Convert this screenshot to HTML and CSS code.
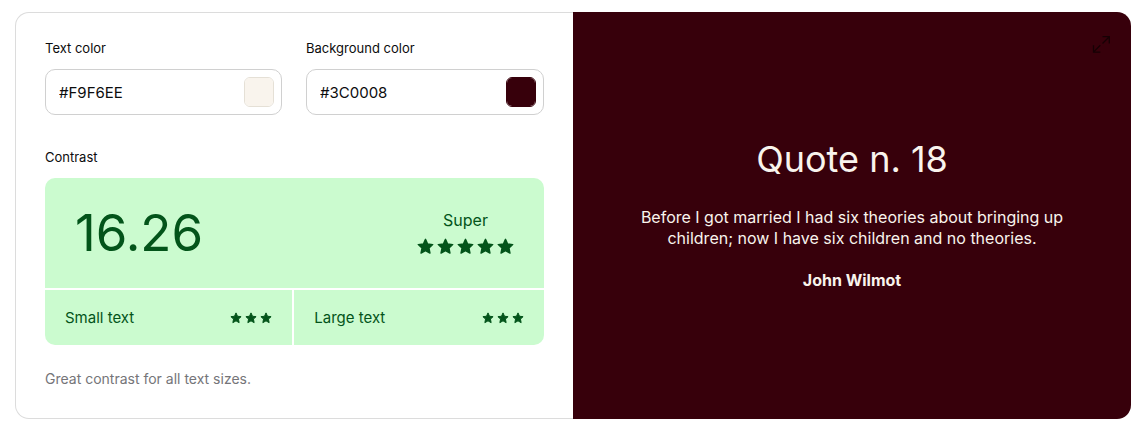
FILE: index.html
```html
<!DOCTYPE html>
<html lang="en">
<head>
  <meta charset="utf-8">
  <meta name="viewport" content="width=device-width, initial-scale=1">
  <title>Color contrast checker</title>
  <link rel="stylesheet" href="styles.css">
</head>
<body>
  <svg class="sprite" aria-hidden="true">
    <symbol id="star" viewBox="0 0 24 24">
      <path d="M12 1.800l3 6.700 7.200 .8-5.300 4.900 1.400 7.100L12 17.700l-6.300 3.600 1.400-7.100-5.300-4.900 7.200-.8z" fill="currentColor" stroke="currentColor" stroke-width="2" stroke-linejoin="round"/>
    </symbol>
  </svg>
  <main class="checker">
    <section class="settings">
      <div class="fields">
        <div class="field">
          <label class="label" for="text-hex">Text color</label>
          <div class="control">
            <input class="hex" id="text-hex" type="text" value="#F9F6EE" spellcheck="false">
            <input class="swatch swatch-text" type="color" value="#f9f4ed" aria-label="Pick text color">
          </div>
        </div>
        <div class="field">
          <label class="label" for="background-hex">Background color</label>
          <div class="control">
            <input class="hex" id="background-hex" type="text" value="#3C0008" spellcheck="false">
            <input class="swatch swatch-background" type="color" value="#37000b" aria-label="Pick background color">
          </div>
        </div>
      </div>
      <h2 class="label contrast-label">Contrast</h2>
      <div class="result">
        <div class="score">
          <span class="ratio">16.26</span>
          <div class="rating">
            <span class="verdict">Super</span>
            <div class="stars" role="img" aria-label="5 stars">
              <svg class="star"><use href="#star"/></svg>
              <svg class="star"><use href="#star"/></svg>
              <svg class="star"><use href="#star"/></svg>
              <svg class="star"><use href="#star"/></svg>
              <svg class="star"><use href="#star"/></svg>
            </div>
          </div>
        </div>
        <div class="size">
          <span>Small text</span>
          <div class="stars" role="img" aria-label="3 stars">
            <svg class="star star-small"><use href="#star"/></svg>
            <svg class="star star-small"><use href="#star"/></svg>
            <svg class="star star-small"><use href="#star"/></svg>
          </div>
        </div>
        <div class="size">
          <span>Large text</span>
          <div class="stars" role="img" aria-label="3 stars">
            <svg class="star star-small"><use href="#star"/></svg>
            <svg class="star star-small"><use href="#star"/></svg>
            <svg class="star star-small"><use href="#star"/></svg>
          </div>
        </div>
      </div>
      <p class="note">Great contrast for all text sizes.</p>
    </section>
    <section class="preview">
      <button class="expand" type="button" aria-label="Full screen">
        <svg class="expand-icon" viewBox="0 0 20 20" fill="none" stroke="currentColor" stroke-width="1.300">
          <path d="M11.500 2.700h6.800v6.800M18.300 2.700l-6.800 6.800M2.500 11.300v6.800h6.800M2.500 18.100l6.800-6.800"/>
        </svg>
      </button>
      <h1 class="quote-title">Quote n. 18</h1>
      <p class="quote">Before I got married I had six theories about bringing up children; now I have six children and no theories.</p>
      <p class="author">John Wilmot</p>
    </section>
  </main>
</body>
</html>
```

FILE: styles.css
```css
* {
  box-sizing: border-box;
}

body {
  margin: 0;
  padding: 12px 14px 12px 15px;
  background: #fff;
  color: #0c0c0d;
  font-family: Inter, "Liberation Sans", sans-serif;
}

h1, h2, p {
  margin: 0;
}

.sprite {
  display: none;
}

.checker {
  display: grid;
  grid-template-columns: minmax(0, 1fr) minmax(0, 1fr);
}

.settings {
  padding: 25px 29px 29px;
  border: 1px solid #dcdcdc;
  border-right: 0;
  border-radius: 14px 0 0 14px;
}

.fields {
  display: grid;
  grid-template-columns: minmax(0, 237fr) minmax(0, 238fr);
  gap: 24px;
}

.label {
  display: block;
  margin-bottom: 11px;
  font-size: 13px;
  font-weight: 400;
  line-height: 20px;
}

.control {
  display: flex;
  align-items: center;
  height: 46px;
  padding: 0 7px 0 13px;
  border: 1px solid #d0d0d0;
  border-radius: 10px;
}

.hex {
  flex: 1;
  min-width: 0;
  height: 30px;
  padding: 0;
  border: 0;
  outline: 0;
  background: none;
  color: inherit;
  font: 15px/20px Inter, "Liberation Sans", sans-serif;
}

.swatch {
  appearance: none;
  width: 30px;
  height: 30px;
  padding: 0;
  border: 1px solid;
  border-radius: 6px;
  overflow: hidden;
  cursor: pointer;
}

.swatch::-webkit-color-swatch-wrapper {
  padding: 0;
}

.swatch::-webkit-color-swatch {
  border: 0;
  border-radius: 0;
}

.swatch-text {
  border-color: #e5e0d6;
  background: #f9f4ed;
}

.swatch-background {
  border-color: #37000b;
  background: #37000b;
}

.contrast-label {
  margin-top: 32px;
}

.result {
  display: grid;
  grid-template-columns: 99fr 100fr;
  gap: 2px;
  border-radius: 10px;
  overflow: hidden;
  color: #03541a;
}

.score {
  grid-column: 1 / -1;
  display: flex;
  align-items: center;
  justify-content: space-between;
  height: 110px;
  padding: 0 30px;
  background: #cbfbcf;
}

.ratio {
  font-size: 51px;
  line-height: 60px;
}

.rating {
  display: grid;
  justify-items: center;
  gap: 8px;
  padding-bottom: 2px;
}

.verdict {
  font-size: 16px;
  line-height: 20px;
}

.stars {
  display: flex;
  gap: 3px;
}

.star {
  width: 17px;
  height: 17px;
}

.star-small {
  width: 12px;
  height: 12px;
}

.size {
  display: flex;
  align-items: center;
  justify-content: space-between;
  height: 55px;
  padding: 0 20px;
  background: #cbfbcf;
  font-size: 15px;
  line-height: 20px;
}

.note {
  margin-top: 24px;
  color: #757579;
  font-size: 14px;
  line-height: 20px;
}

.preview {
  position: relative;
  display: flex;
  flex-direction: column;
  align-items: center;
  justify-content: center;
  padding: 40px 60px 43px;
  border-radius: 0 14px 14px 0;
  background: #37000b;
  color: #f9f4ed;
  text-align: center;
}

.quote-title {
  font-size: 36px;
  font-weight: 400;
  line-height: 44px;
}

.quote {
  margin-top: 26px;
  font-size: 16px;
  font-weight: 400;
  line-height: 21px;
}

.author {
  margin-top: 21px;
  font-size: 16px;
  font-weight: 700;
  line-height: 21px;
}

.expand {
  position: absolute;
  top: 22px;
  right: 20px;
  display: flex;
  padding: 0;
  border: 0;
  background: none;
  color: #160004;
  cursor: pointer;
}

.expand-icon {
  width: 20px;
  height: 20px;
}
```
